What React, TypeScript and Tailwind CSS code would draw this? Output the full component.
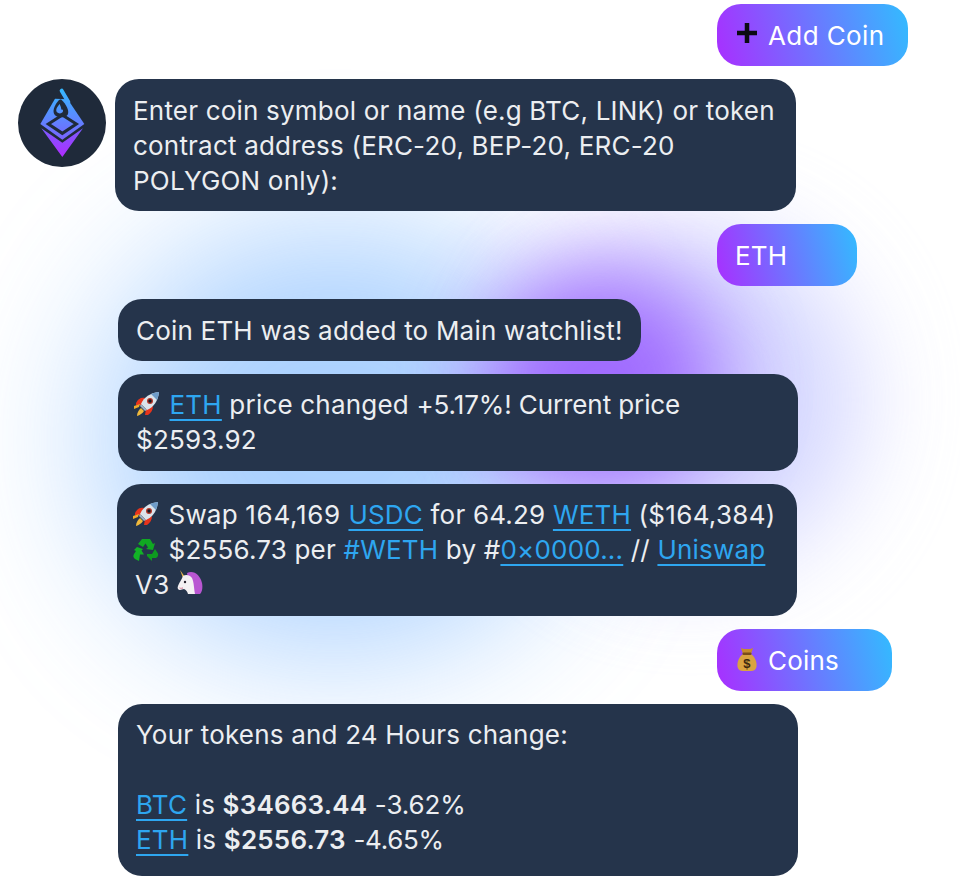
function Rocket() {
  return (
    <svg viewBox="0 0 26 26" className="-ml-0.5 mr-0.5 inline-block h-[26px] w-[26px] align-[-3px]">
      <path d="M2 12c2-4 5-6 9-5l-3 7-6 0z" fill="#e8341c" />
      <path d="M14 24c3-2 5-5 5-9l-7 3-1 6z" fill="#e8341c" />
      <path d="M7 13C10 6 16 2 25 1c-1 9-5 15-12 18z" fill="#dbe3ea" />
      <path d="M25 1c-3 .2-5.500 1-8 2l6 6c1-2.500 1.700-5 2-8z" fill="#6f9cc8" />
      <path d="M7 13c3 3 4 4 6 6l-2 1-5-5z" fill="#9fb2c4" />
      <circle cx="16" cy="10" r="3" fill="#b5382a" />
      <circle cx="16" cy="10" r="1.700" fill="#141a26" />
      <path d="M7 17l3 3c-1.500 2.500-4 4-7 5 0-3 1.500-6 4-8z" fill="#f0b93c" />
      <path d="M0 15l6-2-1 3-5 2z" fill="#f0a828" />
    </svg>
  );
}

function Recycle() {
  return (
    <svg viewBox="0 0 26 26" className="-ml-0.5 mr-0.5 inline-block h-[26px] w-[26px] align-[-4px]">
      <path d="M9 2h8l3 5 2-1-2 7-7-1 2-1.500-2.500-4L10 10 5 7z" fill="#10a822" />
      <path d="M4 10l6 2-1.500 1.500 2.500 4H7l-1 6.500-4-2c-2-1.500-2-3.500-1-5l2-3-2-1z" fill="#12b226" />
      <path d="M14 17h5l3-5 3 4.500c.6 2-.4 4-2 4.500h-4v3l-5-5z" fill="#0e9a20" />
    </svg>
  );
}

function Unicorn() {
  return (
    <svg viewBox="0 0 26 26" className="inline-block h-[26px] w-[26px] align-[-2px]">
      <path d="M3 0l5 7-2 1z" fill="#e7b84f" />
      <path d="M10 3c7-3 13 2 15 10 1 5 0 9-2 11h-8c-2-3-2-6-3-9z" fill="#b956d2" />
      <path d="M6 6c3-2 7-1 9 2 2 4 2 11 3 16H11c-1-3-2-4-4-5l-4 1c-2 0-3-2-2-4 1-3 3-5 5-10z" fill="#f4f1f3" />
      <circle cx="8" cy="12" r="1.200" fill="#2a2430" />
      <path d="M2 17c1 1 3 1 4 0v2H3z" fill="#e3a6b8" />
    </svg>
  );
}

function MoneyBag() {
  return (
    <svg viewBox="0 0 20 24" className="ml-0.5 inline-block h-6 w-5">
      <path d="M4 0c2 1 3 1 6 1 3 0 4 0 6-1l-2 6H6z" fill="#c78d2e" />
      <path d="M6 6h8c4 3 6 8 5.500 12.500-.4 3-2.500 4.500-5.500 4.500H6c-3 0-5.100-1.500-5.500-4.500C0 14 2 9 6 6z" fill="#d9a441" />
      <rect x="5.500" y="4.500" width="9" height="2.500" rx="1" fill="#7a4e18" />
      <text x="10" y="20" textAnchor="middle" fontSize="13" fontWeight="700" fontFamily="Liberation Sans, sans-serif" fill="#3d2a10">$</text>
    </svg>
  );
}

function Logo() {
  return (
    <svg viewBox="55 237 264 264" className="h-[88px] w-[88px] shrink-0">
      <defs>
        <linearGradient id="logoTop" gradientUnits="userSpaceOnUse" x1="188" y1="268" x2="188" y2="420">
          <stop offset="0" stopColor="#35b8ff" />
          <stop offset="1" stopColor="#7a62ff" />
        </linearGradient>
        <linearGradient id="logoBottom" gradientUnits="userSpaceOnUse" x1="188" y1="385" x2="188" y2="470">
          <stop offset="0" stopColor="#7a5cff" />
          <stop offset="1" stopColor="#b02cff" />
        </linearGradient>
      </defs>
      <circle cx="187" cy="369" r="132" fill="#1f2a3a" />
      <path d="M125 385l63 43 62-43-62 86z" fill="url(#logoBottom)" />
      <path d="M166 296L122 372l66 47 66-47-50-74z" fill="url(#logoTop)" />
      <path d="M186 272l20 34" stroke="url(#logoTop)" strokeWidth="12" strokeLinecap="round" />
      <path d="M146 372l42-27 42 27-42 28z" fill="none" stroke="#1f2a3a" strokeWidth="9" />
      <path d="M178 300c-14 16-22 34-12 46 8 8 30 8 38-2 6-12-4-30-20-46z" fill="#1f2a3a" />
      <path d="M180 312c-9 10-13 18-8 25 5 5 16 4 18-3 1-5-3-6-5-5 0-5-2-10-5-17z" fill="url(#logoTop)" />
    </svg>
  );
}

function Plus() {
  return (
    <svg viewBox="0 0 20 20" className="ml-0.5 inline-block h-5 w-5 -translate-y-0.5">
      <path d="M10 0v20M0 10h20" stroke="#0b0b12" strokeWidth="4.500" />
    </svg>
  );
}

function Coin({ children }: { children: React.ReactNode }) {
  return <a className="text-[#2ea6f0] underline decoration-2 underline-offset-[5px]">{children}</a>;
}

function Sent({ width, children }: { width: string; children: React.ReactNode }) {
  return (
    <div className="flex pl-[717px]">
      <div className={`flex h-[62px] items-center gap-[11px] rounded-[24px] bg-linear-[75deg] from-[#a92eff] to-[#32bcff] pl-[18px] text-white ${width}`}>
        {children}
      </div>
    </div>
  );
}

function Bubble({ className, children }: { className: string; children: React.ReactNode }) {
  return (
    <div className={`rounded-[24px] bg-[#25344b] px-[18px] text-[#eceef1] ${className}`}>
      {children}
    </div>
  );
}

export default function App() {
  return (
    <div className="relative h-[880px] w-[960px] overflow-hidden bg-white font-['Inter',sans-serif] text-[26px] leading-[35px] tracking-[0.2px]">
      {/* glow behind the chat */}
      <div className="absolute left-[100px] top-[230px] h-[420px] w-[470px] rounded-full bg-[#7db8ff] opacity-65 blur-[75px]" />
      <div className="absolute left-[520px] top-[230px] h-[340px] w-[340px] rounded-full bg-[#c9ccff] opacity-80 blur-[50px]" />
      <div className="absolute left-[480px] top-[270px] h-[220px] w-[240px] rounded-full bg-[#9350ff] opacity-80 blur-[45px]" />

      <div className="relative flex flex-col gap-[13px] pt-1">
        <Sent width="w-[191px]"><Plus /> <span className="tracking-[0.4px]">Add Coin</span></Sent>

        <div className="flex items-start gap-[9px] pl-[18px]">
          <Logo />
          <Bubble className="w-[681px] py-[13.5px]">
            Enter coin symbol or name (e.g BTC, LINK) or token contract address (ERC-20, BEP-20, ERC-20 POLYGON only):
          </Bubble>
        </div>

        <Sent width="w-[140px]">ETH</Sent>

        <div className="pl-[118px]">
          <Bubble className="w-[523px] py-[13.5px]">Coin ETH was added to Main watchlist!</Bubble>
        </div>

        <div className="pl-[118px]">
          <Bubble className="w-[680px] pb-[14px] pt-[13px]">
            <Rocket /> <Coin>ETH</Coin> price changed <span className="tracking-[-0.1px]">+5.17%! Current price</span> $2593.92
          </Bubble>
        </div>

        <div className="pl-[117px]">
          <Bubble className="w-[680px] pb-[14px] pt-[13px]">
            <Rocket /> Swap <span className="tracking-[0.7px]">164,169</span> <Coin>USDC</Coin> for 64.29 <Coin>WETH</Coin> <span className="tracking-[0.3px]">($164,384)</span>
            <br />
            <Recycle /> $2556.73 per <span className="text-[#2ea6f0]">#WETH</span> by #<Coin>0×0000...</Coin> // <Coin>Uniswap</Coin>
            <br />
            V3 <Unicorn />
          </Bubble>
        </div>

        <Sent width="w-[175px]"><MoneyBag /> Coins</Sent>

        <div className="pl-[118px]">
          <Bubble className="w-[680px] pb-[19px] pt-[13px]">
            Your tokens and 24 Hours change:
            <br />
            <br />
            <Coin>BTC</Coin> is <b className="font-semibold">$34663.44</b> <span className="tracking-[-0.1px]">-3.62%</span>
            <br />
            <Coin>ETH</Coin> is <b className="font-semibold">$2556.73</b> <span className="tracking-[-0.3px]">-4.65%</span>
          </Bubble>
        </div>
      </div>
    </div>
  );
}
